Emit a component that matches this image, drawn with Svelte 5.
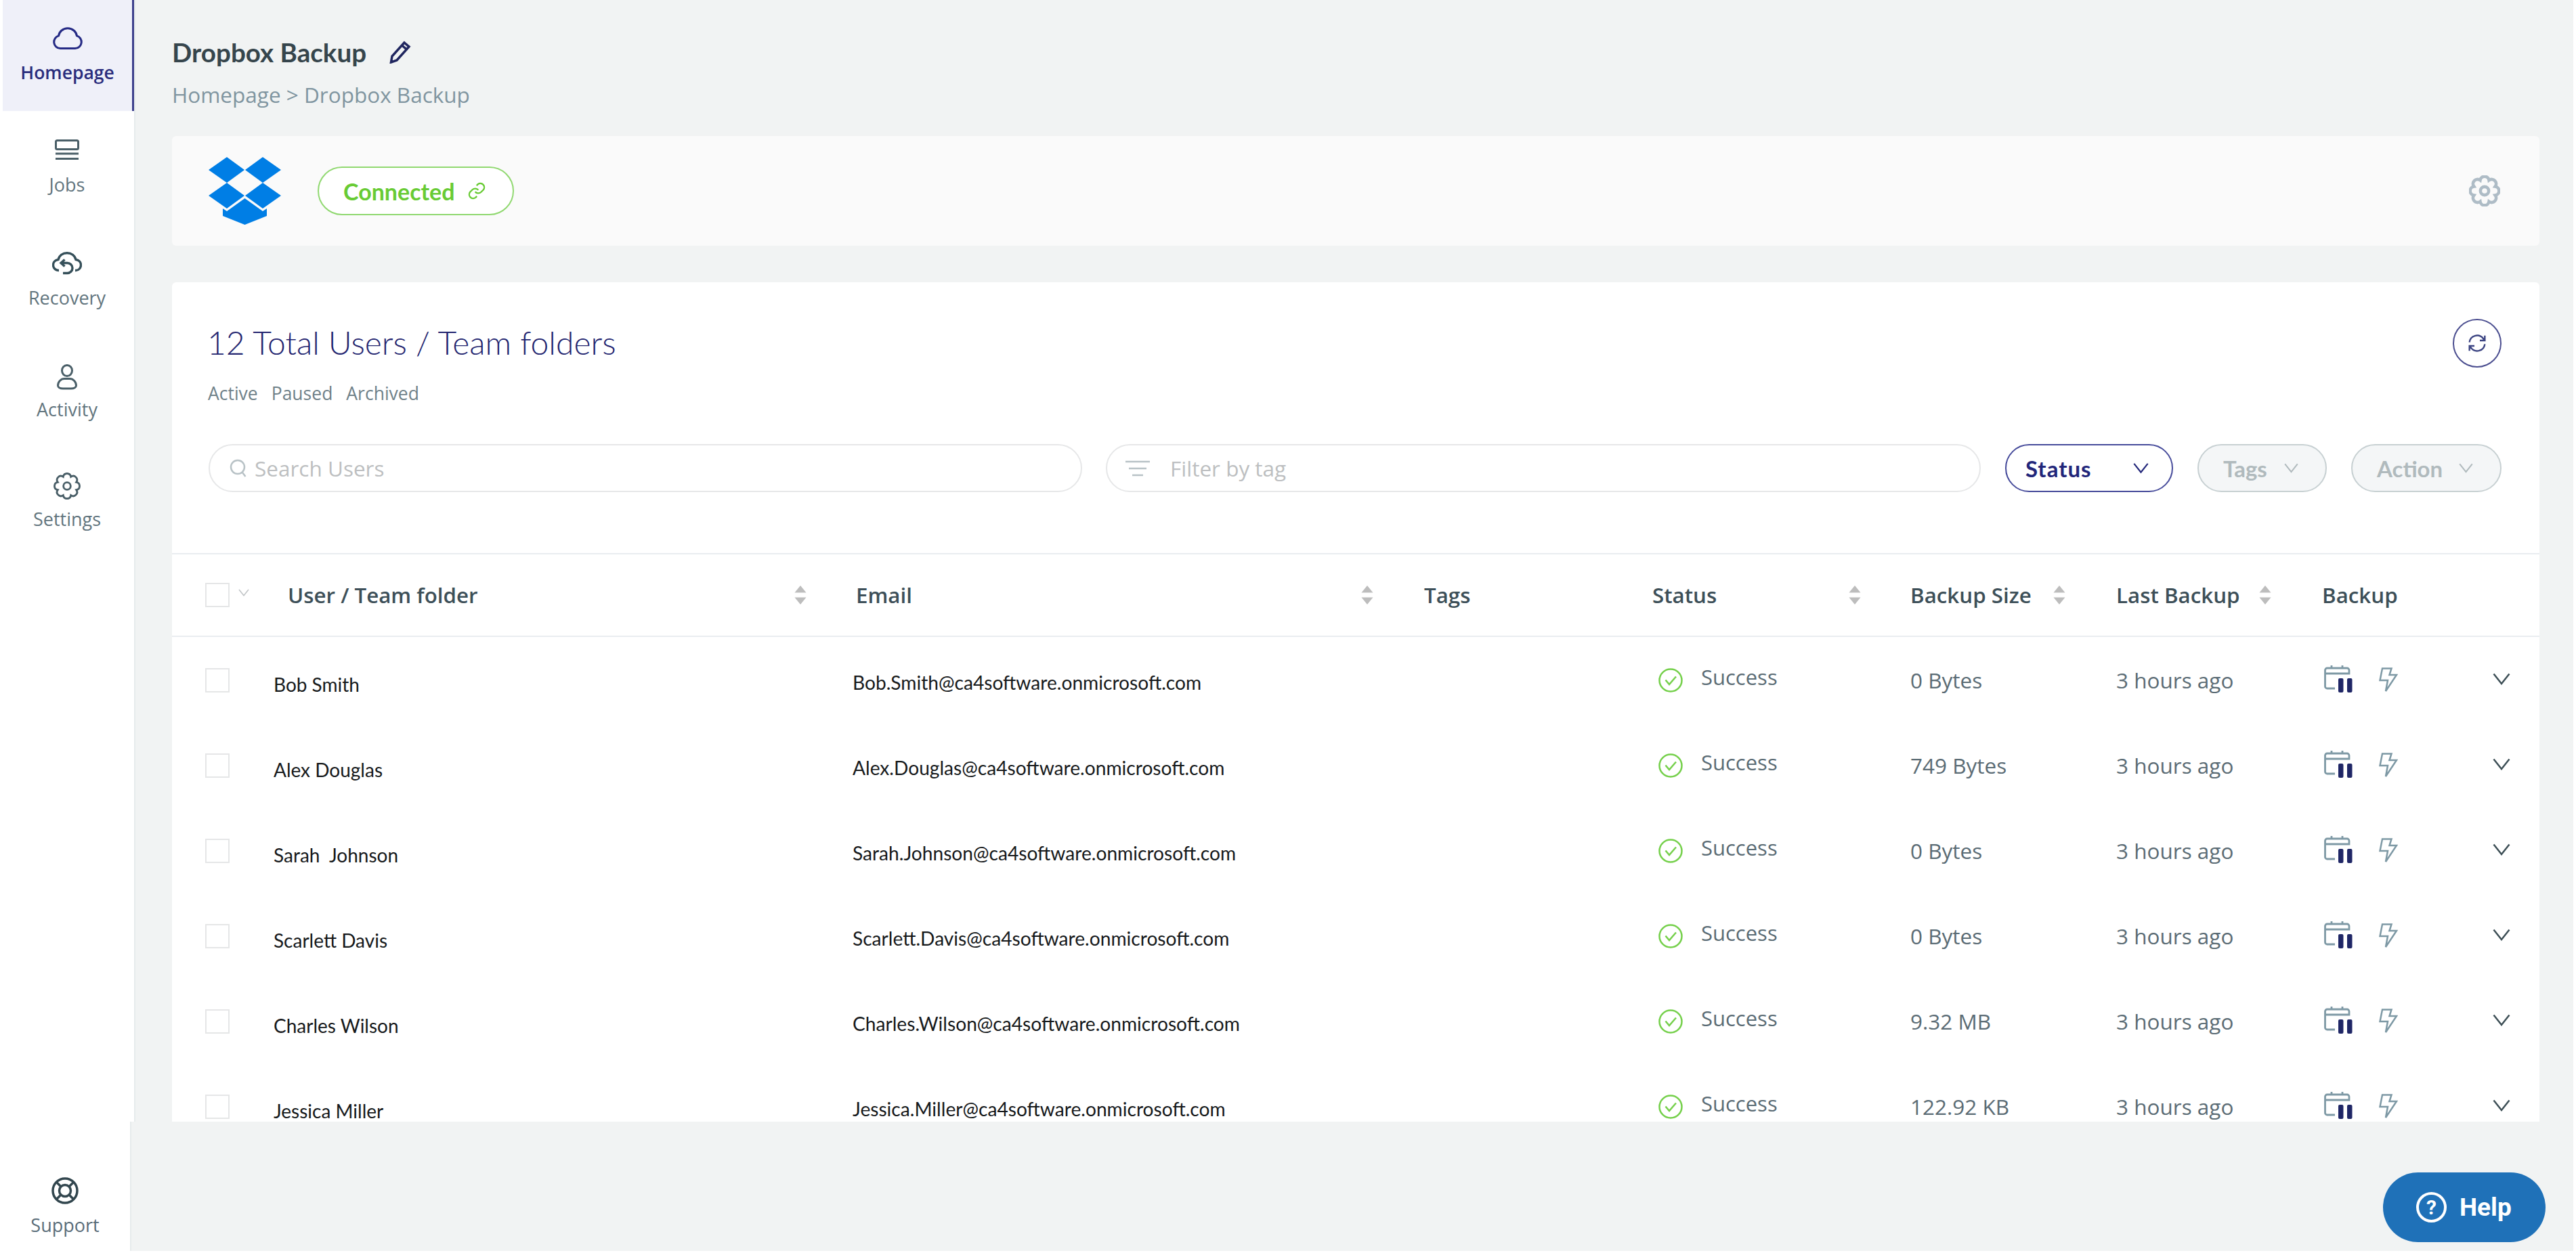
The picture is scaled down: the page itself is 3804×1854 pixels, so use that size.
<script lang="ts">
  const users = [
    { name: 'Bob Smith', email: 'Bob.Smith@ca4software.onmicrosoft.com', size: '0 Bytes' },
    { name: 'Alex Douglas', email: 'Alex.Douglas@ca4software.onmicrosoft.com', size: '749 Bytes' },
    { name: 'Sarah  Johnson', email: 'Sarah.Johnson@ca4software.onmicrosoft.com', size: '0 Bytes' },
    { name: 'Scarlett Davis', email: 'Scarlett.Davis@ca4software.onmicrosoft.com', size: '0 Bytes' },
    { name: 'Charles Wilson', email: 'Charles.Wilson@ca4software.onmicrosoft.com', size: '9.32 MB' },
    { name: 'Jessica Miller', email: 'Jessica.Miller@ca4software.onmicrosoft.com', size: '122.92 KB' }
  ];

  // wavy 8-lobed gear used by the sidebar and the connection card
  function gearPath(): string {
    const pt = (deg: number, r: number) => {
      const a = (deg * Math.PI) / 180;
      return `${(12 + r * Math.cos(a)).toFixed(2)} ${(12 + r * Math.sin(a)).toFixed(2)}`;
    };
    let d = `M${pt(-112.5, 8.9)}`;
    for (let i = 0; i < 8; i++) {
      const c = -90 + i * 45;
      d += ` C${pt(c - 13, 12.4)} ${pt(c + 13, 12.4)} ${pt(c + 22.5, 8.9)}`;
    }
    return d + 'Z';
  }
  const gear = gearPath();
</script>

{#snippet sortIcon()}
  <svg class="sort" viewBox="0 0 18 28" aria-hidden="true">
    <path d="M9 0 17.5 10.5H.5Z" />
    <path d="M9 28 .5 17.5H17.5Z" />
  </svg>
{/snippet}

{#snippet chevron(cls)}
  <svg class="chev {cls}" viewBox="0 0 26 18" aria-hidden="true">
    <path d="M1.5 1.5 13 16 24.5 1.5" />
  </svg>
{/snippet}

<div class="app">
  <div class="upper">
    <nav class="sidebar">
      <a class="nav-item active">
        <svg class="nav-icon" width="46" height="34" viewBox="0 0 46 34">
          <path d="M12 31.5H34a9.5 9.5 0 0 0 2.5-18.6C35.5 6.6 30 1.8 23 1.8S10.5 6.6 9.5 12.9A9.5 9.5 0 0 0 12 31.5Z" />
        </svg>
        <span>Homepage</span>
      </a>
      <a class="nav-item">
        <svg class="nav-icon" width="36" height="30" viewBox="0 0 36 30">
          <rect x="1.5" y="1.5" width="33" height="13" rx="2" />
          <path d="M1 21H35M1 28.5H35" />
        </svg>
        <span>Jobs</span>
      </a>
      <a class="nav-item">
        <svg class="nav-icon recover" width="44" height="36" viewBox="0 0 44 36">
          <path d="M10 27.5C4.5 27.5 1.5 23.5 1.5 19.5 1.5 15 5 12 9 11.5 10.5 5.5 15.5 1.7 22 1.7S33.5 5.5 35 11.5C39 12 42.5 15 42.5 19.5 42.5 23.5 39.5 27.5 35 27.5H34" />
          <path d="M13.5 16.5H22.5A7.5 7.5 0 0 1 22.5 31.5H16M18.5 11.5 13 16.5 18.5 21.5" />
        </svg>
        <span>Recovery</span>
      </a>
      <a class="nav-item">
        <svg class="nav-icon" width="30" height="38" viewBox="0 0 30 38">
          <ellipse cx="15" cy="9.5" rx="7.5" ry="8" />
          <path d="M9 36H21C25.5 36 28.5 34 28.5 31.5 28.5 26 24 21.5 19 21.5H11C6 21.5 1.5 26 1.5 31.5 1.5 34 4.5 36 9 36Z" />
        </svg>
        <span>Activity</span>
      </a>
      <a class="nav-item">
        <svg class="nav-icon" width="40" height="40" viewBox="0 0 24 24">
          <path d={gear} stroke-width="1.7" />
          <circle cx="12" cy="12" r="3.2" stroke-width="1.7" />
        </svg>
        <span>Settings</span>
      </a>
    </nav>

    <main class="main">
      <header class="page-head">
        <h1>Dropbox Backup
          <svg class="pencil" width="32" height="34" viewBox="0 0 32 34">
            <path d="M22 3 29 9 11 29 2.5 32 4 23Z M18.5 7 25.5 13" />
          </svg>
        </h1>
        <p class="crumbs">Homepage &gt; Dropbox Backup</p>
      </header>

      <section class="conn-card">
        <svg class="logo" width="107" height="100" viewBox="0 0 107 100">
          <path fill="#007ee5" d="M27 0 53 19 27 38 0 19ZM80 0 107 19 80 38 54 19ZM27 38 53 57 27 76 0 57ZM80 38 107 57 80 76 54 57Z" />
          <path fill="#007ee5" stroke="#fafafa" stroke-width="2.5" paint-order="stroke" d="M53.5 61 27 80 21 76V87L53.5 100 86 87V76L80 80Z" />
        </svg>
        <div class="conn-pill">
          <span>Connected</span>
          <svg width="28" height="28" viewBox="0 0 24 24">
            <path d="M10 13a5 5 0 0 0 7.5.5l3-3a5 5 0 0 0-7-7l-1.7 1.7M14 11a5 5 0 0 0-7.5-.5l-3 3a5 5 0 0 0 7 7l1.7-1.7" />
          </svg>
        </div>
        <svg class="conn-gear" width="46" height="46" viewBox="0 0 24 24">
          <path d={gear} stroke-width="2.4" />
          <circle cx="12" cy="12" r="3.2" stroke-width="2.4" />
        </svg>
      </section>

      <section class="users-card">
        <div class="users-head">
          <div>
            <h2>12 Total Users / Team folders</h2>
            <div class="tabs"><span>Active</span><span>Paused</span><span>Archived</span></div>
          </div>
          <button class="refresh" aria-label="Refresh">
            <svg width="32" height="32" viewBox="0 0 24 24">
              <path d="M3.5 11a8.5 8.5 0 0 1 15-4.5L20.5 9M20.5 3.5V9H15M20.5 13a8.5 8.5 0 0 1-15 4.5L3.5 15M3.5 20.5V15H9" />
            </svg>
          </button>
        </div>

        <div class="toolbar">
          <div class="field search">
            <svg width="26" height="28" viewBox="0 0 26 28">
              <circle cx="12" cy="12" r="10" />
              <path d="M19 20 23.5 26" />
            </svg>
            <span>Search Users</span>
          </div>
          <div class="field filter">
            <svg width="38" height="24" viewBox="0 0 38 24">
              <path d="M1 2H37M6 12H32M11 22H27" />
            </svg>
            <span>Filter by tag</span>
          </div>
          <div class="pill status">Status {@render chevron('c-status')}</div>
          <div class="pill muted tags">Tags {@render chevron('c-muted')}</div>
          <div class="pill muted action">Action {@render chevron('c-muted')}</div>
        </div>

        <div class="grid head-row">
          <div class="cell-name">
            <span class="check"></span>
            {@render chevron('c-all')}
            <span class="h-label first">User / Team folder</span>
            {@render sortIcon()}
          </div>
          <div class="h-cell email-h"><span class="h-label">Email</span>{@render sortIcon()}</div>
          <div class="h-cell"><span class="h-label">Tags</span></div>
          <div class="h-cell status-h"><span class="h-label">Status</span>{@render sortIcon()}</div>
          <div class="h-cell"><span class="h-label">Backup Size</span>{@render sortIcon()}</div>
          <div class="h-cell"><span class="h-label">Last Backup</span>{@render sortIcon()}</div>
          <div class="h-cell"><span class="h-label">Backup</span></div>
          <div></div>
        </div>

        {#each users as user}
          <div class="grid row">
            <div class="name-cell">
              <span class="check"></span>
              <span class="name">{user.name}</span>
            </div>
            <div class="email">{user.email}</div>
            <div></div>
            <div class="status-cell">
              <svg width="36" height="36" viewBox="0 0 36 36">
                <circle cx="18" cy="18" r="16.5" />
                <path d="M10.5 17.5 16 24 26 12.5" />
              </svg>
              <span>Success</span>
            </div>
            <div class="meta">{user.size}</div>
            <div class="meta">3 hours ago</div>
            <div class="backup-icons">
              <svg width="42" height="40" viewBox="0 0 42 40">
                <path class="cal" d="M16 34H4.5A3 3 0 0 1 1.5 31V7A3 3 0 0 1 4.5 4H34A3 3 0 0 1 37 7V12H2M11 0V4M27 0V4" />
                <rect x="21" y="19" width="7.5" height="21" rx="2" />
                <rect x="34" y="19" width="7.5" height="21" rx="2" />
              </svg>
              <svg class="bolt" width="28" height="37" viewBox="0 0 28 37">
                <path d="M5 1.5H18.5L15.5 11H26L10 35 13 19H1.5Z" />
              </svg>
            </div>
            <div class="row-chev">{@render chevron('c-row')}</div>
          </div>
        {/each}
      </section>
    </main>
  </div>

  <div class="lower">
    <a class="support">
      <svg width="40" height="40" viewBox="0 0 40 40">
        <circle cx="20" cy="20" r="18" />
        <circle cx="20" cy="20" r="8.5" />
        <path d="M7.5 7.5 14 14M32.5 7.5 26 14M7.5 32.5 14 26M32.5 32.5 26 26" />
      </svg>
      <span>Support</span>
    </a>
    <div class="lower-fill"></div>
  </div>

  <button class="help">
    <span class="help-q">?</span>
    <span>Help</span>
  </button>
</div>

<style>
  :global(body) {
    margin: 0;
    background: #fff;
    overflow: hidden;
  }

  .app {
    width: 3804px;
    height: 1854px;
    position: relative;
    font-family: "Open Sans", "Noto Sans", sans-serif;
    color: #3a4c55;
  }

  .upper {
    display: flex;
    height: 1657px;
  }

  .sidebar {
    width: 200px;
    flex: none;
    box-sizing: border-box;
    border-right: 2px solid #e6ebec;
  }

  .nav-item {
    height: 166px;
    box-sizing: border-box;
    padding-top: 40px;
    display: flex;
    flex-direction: column;
    align-items: center;
    color: #62757e;
    font-size: 27px;
  }

  .nav-item svg {
    fill: none;
    stroke: #4a5f68;
    stroke-width: 3;
  }

  .nav-item .recover {
    stroke: #36505a;
    stroke-width: 3.4;
  }

  .nav-item:nth-child(1) span { margin-top: 15px; }
  .nav-item:nth-child(2) span { margin-top: 18px; }
  .nav-item:nth-child(3) span { margin-top: 13px; }
  .nav-item:nth-child(4) span { margin-top: 10px; }
  .nav-item:nth-child(5) { padding-top: 34px; }
  .nav-item:nth-child(5) span { margin-top: 10px; }

  .nav-item.active {
    height: 164px;
    margin: 0 0 2px 4px;
    background: #eff0f9;
    border-right: 3px solid #3c3f8c;
    color: #2a2d7d;
    font-size: 26.5px;
    font-weight: 600;
  }

  .nav-item.active svg {
    stroke: #252a85;
  }

  .main {
    flex: 1;
    min-width: 0;
    background: #f1f3f3;
    padding: 0 50px 0 54px;
    margin-right: 4px;
    overflow: hidden;
  }

  .page-head {
    padding-top: 57px;
    height: 144px;
  }

  h1 {
    margin: 0;
    font-family: Lato, sans-serif;
    font-size: 38.6px;
    line-height: 40px;
    font-weight: 700;
    color: #36454c;
    display: flex;
    align-items: center;
    gap: 34px;
  }

  .pencil {
    fill: none;
    stroke: #20265f;
    stroke-width: 3.5;
  }

  .crumbs {
    margin: 23px 0 0;
    font-size: 31.5px;
    line-height: 40px;
    color: #8095a0;
  }

  .conn-card {
    height: 162px;
    background: #fafafa;
    border-radius: 6px;
    display: flex;
    align-items: center;
    padding: 0 58px 0 54px;
  }

  .conn-pill {
    margin-left: 54px;
    width: 290px;
    height: 72px;
    box-sizing: border-box;
    border: 2px solid #90d870;
    border-radius: 36px;
    background: #fff;
    display: flex;
    align-items: center;
    gap: 18px;
    padding-left: 36px;
    color: #68cb34;
    font-family: Lato, sans-serif;
    font-weight: 700;
    font-size: 34px;
  }

  .conn-pill svg {
    fill: none;
    stroke: #68cb34;
    stroke-width: 2;
  }

  .conn-gear {
    margin-left: auto;
    fill: none;
    stroke: #aebcc6;
  }

  .users-card {
    margin-top: 54px;
    background: #fff;
    border-radius: 6px 6px 0 0;
    height: 1240px;
    overflow: hidden;
  }

  .users-head {
    display: flex;
    justify-content: space-between;
    align-items: flex-start;
    padding: 54px 56px 0 52px;
  }

  h2 {
    margin: 5px 0 0;
    font-family: Lato, sans-serif;
    font-weight: 300;
    font-size: 48px;
    line-height: 60px;
    color: #22246f;
  }

  .tabs {
    margin-top: 25px;
    padding-left: 1px;
    display: flex;
    gap: 20px;
    font-size: 26.5px;
    line-height: 40px;
    color: #6f8189;
  }

  .refresh {
    width: 72px;
    height: 72px;
    padding: 0;
    border: 2px solid #4c4f90;
    border-radius: 50%;
    background: #fff;
    display: flex;
    align-items: center;
    justify-content: center;
  }

  .refresh svg {
    fill: none;
    stroke: #3d4583;
    stroke-width: 1.8;
  }

  .toolbar {
    margin-top: 55px;
    padding: 0 56px 0 54px;
    display: flex;
    gap: 36px;
    height: 71px;
  }

  .field {
    flex: 1;
    box-sizing: border-box;
    border: 2px solid #e6e7e8;
    border-radius: 36px;
    display: flex;
    align-items: center;
    color: #bdbfc1;
    font-size: 31.5px;
  }

  .field svg {
    fill: none;
    stroke: #b8c2c6;
    stroke-width: 2.5;
  }

  .search {
    flex: 0 0 1290px;
    margin-right: -1px;
    padding-left: 29px;
    gap: 11px;
  }

  .filter {
    padding-left: 26px;
    gap: 29px;
  }

  .pill {
    box-sizing: border-box;
    border-radius: 36px;
    display: flex;
    align-items: center;
    justify-content: space-between;
    font-family: Lato, sans-serif;
    font-weight: 700;
    font-size: 33px;
    flex: none;
  }

  .status {
    width: 248px;
    border: 2px solid #454a9a;
    color: #22267a;
    padding: 0 34px 0 28px;
    letter-spacing: 1px;
  }

  .muted {
    border: 2px solid #c7d0d2;
    background: #f4f6f7;
    color: #b0babd;
    padding: 0 40px 0 36px;
  }

  .tags { width: 191px; }
  .action { width: 222px; }

  .chev {
    fill: none;
    stroke-width: 2.5;
    flex: none;
  }

  .c-status { width: 23px; height: 17px; stroke: #22267a; }
  .c-muted { width: 21px; height: 15px; stroke: #b0babd; }
  .c-all { width: 16px; height: 11px; stroke: #c0c4c6; margin-left: 13px; margin-top: -8px; }
  .c-row { width: 26px; height: 18px; stroke: #3d4f56; }

  .grid {
    display: grid;
    grid-template-columns: 1005px 844px 337px 381px 304px 304px 252px 68px;
  }

  .head-row {
    margin-top: 90px;
    height: 124px;
    box-sizing: border-box;
    border-top: 2px solid #e9edf0;
    border-bottom: 2px solid #e9edf0;
    align-items: center;
  }

  .cell-name {
    display: flex;
    align-items: center;
    padding: 0 68px 0 49px;
  }

  .h-cell {
    display: flex;
    align-items: center;
    justify-content: space-between;
    padding-right: 75px;
  }

  .email-h {
    padding-left: 5px;
  }

  .status-h {
    padding-right: 73px;
  }

  .h-label {
    font-size: 31.3px;
    font-weight: 600;
    color: #3d4f58;
  }

  .first {
    margin-left: 57px;
    margin-right: auto;
  }

  .sort {
    width: 18px;
    height: 28px;
    fill: #bdbdbd;
    flex: none;
  }

  .check {
    display: block;
    width: 36px;
    height: 36px;
    box-sizing: border-box;
    border: 2px solid #e5e6e7;
    flex: none;
  }

  .row {
    height: 126px;
    align-items: start;
  }

  .name-cell {
    display: flex;
    align-items: flex-start;
    padding: 46px 0 0 49px;
  }

  .name {
    margin-left: 65px;
    margin-top: 4px;
    font-family: Lato, sans-serif;
    font-size: 28px;
    line-height: 40px;
    color: #16191b;
    white-space: pre;
  }

  .email {
    padding-top: 47px;
    font-family: Lato, sans-serif;
    font-size: 28.15px;
    line-height: 40px;
    color: #16191b;
  }

  .status-cell {
    display: flex;
    align-items: flex-start;
    gap: 27px;
    padding: 46px 0 0 9px;
    font-size: 31px;
    line-height: 30px;
    color: #5b6c75;
  }

  .status-cell span {
    margin-top: -2px;
  }

  .status-cell svg {
    fill: none;
    stroke: #75d04b;
    stroke-width: 2.5;
  }

  .meta {
    padding-top: 44px;
    font-size: 31.5px;
    line-height: 40px;
    color: #5b6c75;
  }

  .backup-icons {
    display: flex;
    gap: 39px;
    padding: 42px 0 0 3px;
  }

  .backup-icons svg {
    flex: none;
    fill: #1f2666;
  }

  .backup-icons .bolt {
    margin-top: 3px;
  }

  .cal {
    fill: none;
    stroke: #7e99a5;
    stroke-width: 2.8;
  }

  .bolt path {
    fill: none;
    stroke: #7e99a5;
    stroke-width: 2.5;
  }

  .row-chev {
    padding-top: 53px;
    line-height: 0;
  }

  .lower {
    display: flex;
    height: 194px;
  }

  .support {
    width: 192px;
    flex: none;
    padding-top: 82px;
    box-sizing: border-box;
    display: flex;
    flex-direction: column;
    align-items: center;
    color: #5a6d79;
    font-size: 27px;
    gap: 12px;
  }

  .support svg {
    fill: none;
    stroke: #33474f;
    stroke-width: 3.5;
  }

  .lower-fill {
    flex: 1;
    background: #f1f3f3;
    border-left: 2px solid #e6ebec;
    margin: 0 4px 3px 0;
  }

  .help {
    position: absolute;
    left: 3519px;
    top: 1732px;
    width: 240px;
    height: 103px;
    border: 0;
    border-radius: 52px;
    background: #1f71b8;
    color: #fff;
    display: flex;
    align-items: center;
    gap: 19px;
    padding: 0 0 0 49px;
    font-family: Roboto, sans-serif;
    font-weight: 700;
    font-size: 37px;
  }

  .help-q {
    width: 45px;
    height: 45px;
    box-sizing: border-box;
    border: 4px solid #fff;
    border-radius: 50%;
    display: flex;
    align-items: center;
    justify-content: center;
    font-size: 30px;
    flex: none;
  }
</style>
